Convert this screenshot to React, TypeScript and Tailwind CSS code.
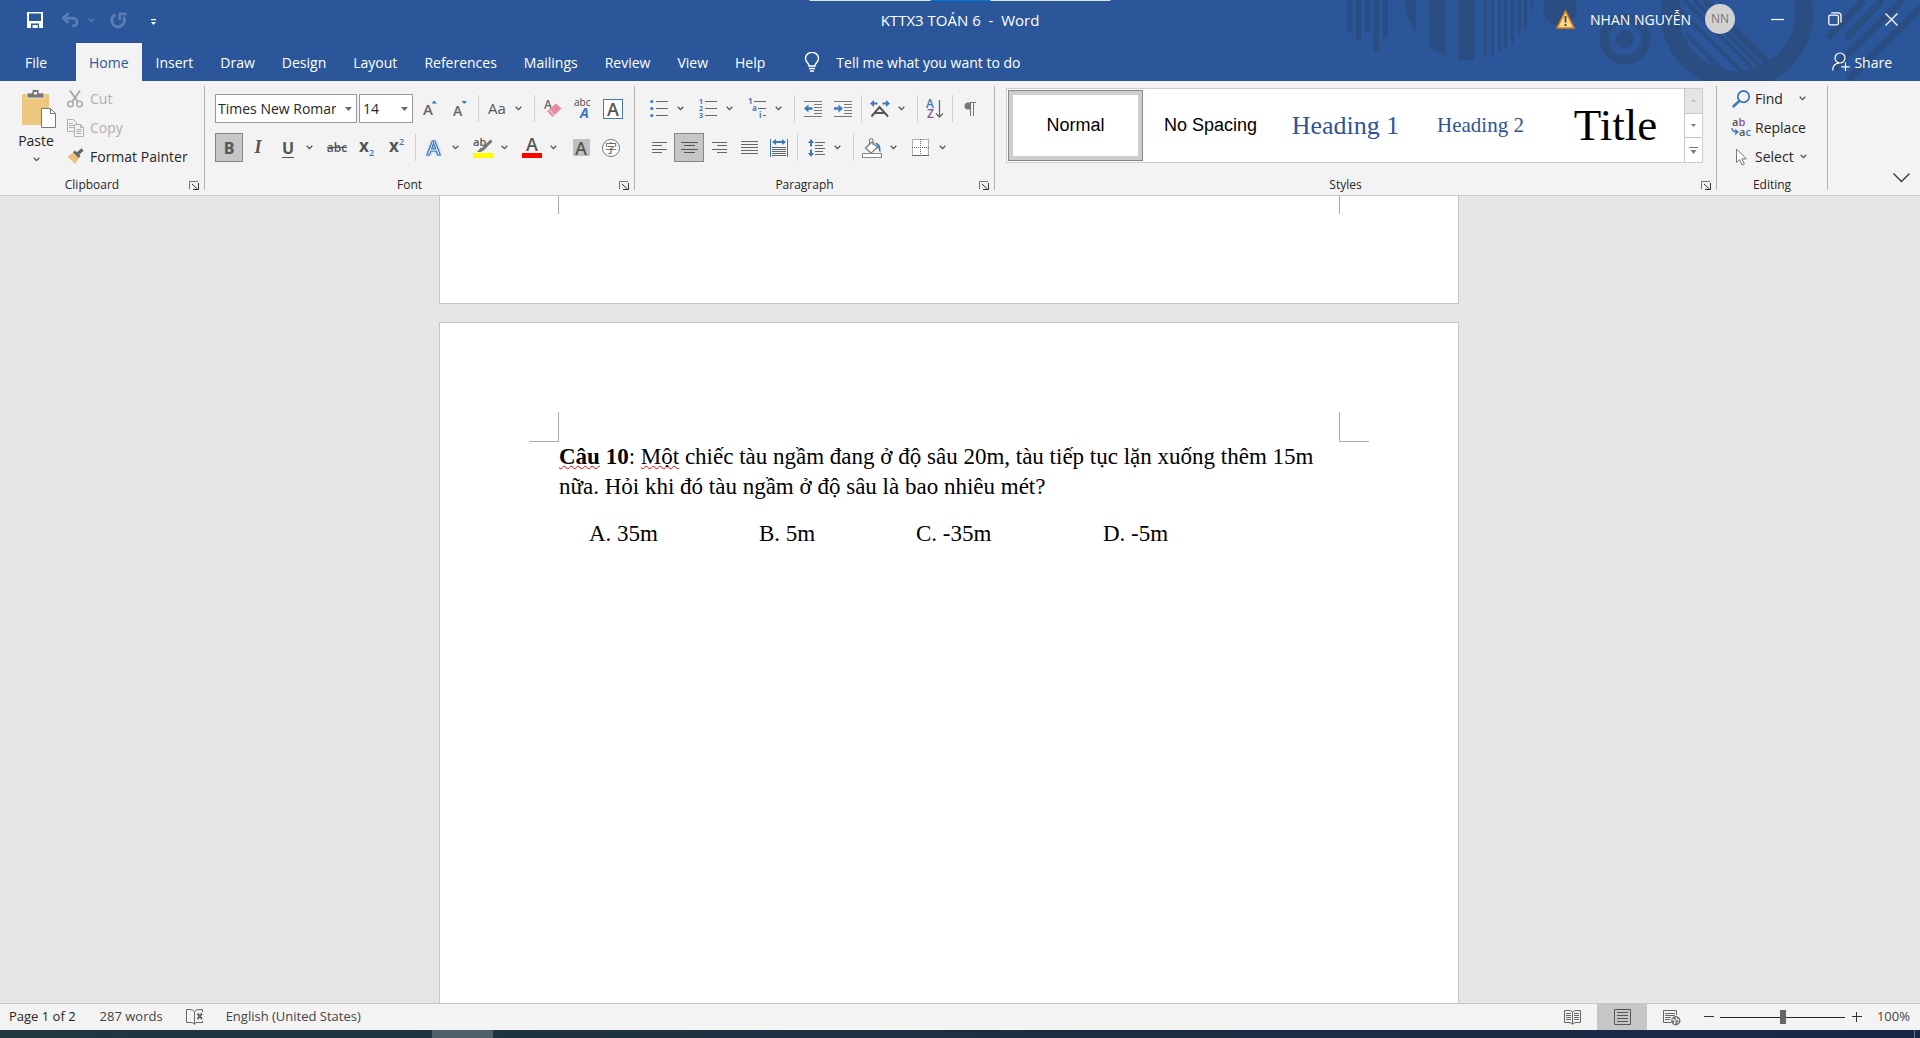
import React, { useState } from 'react';

const TABS = ['Home', 'Insert', 'Draw', 'Design', 'Layout', 'References', 'Mailings', 'Review', 'View', 'Help'];

const STYLES = [
  { name: 'Normal', cls: 'font-["Liberation_Sans",sans-serif] text-[18px] text-black' },
  { name: 'No Spacing', cls: 'font-["Liberation_Sans",sans-serif] text-[18px] text-black' },
  { name: 'Heading 1', cls: 'font-["Liberation_Serif",serif] text-[26px] text-[#2f5496]' },
  { name: 'Heading 2', cls: 'font-["Liberation_Serif",serif] text-[21px] text-[#2f5496]' },
  { name: 'Title', cls: 'font-["Liberation_Serif",serif] text-[45px] text-black' },
];

const ANSWERS = ['A. 35m', 'B. 5m', 'C. -35m', 'D. -5m'];

const Chevron: React.FC = () => (
  <svg width="7" height="5" viewBox="0 0 7 5" fill="none" stroke="#555555" strokeWidth="1.3">
    <path d="M0.7 0.8 L3.5 3.6 L6.3 0.8" />
  </svg>
);

const Triangle: React.FC<{ color?: string }> = ({ color = '#666666' }) => (
  <svg width="7" height="4" viewBox="0 0 7 4" fill={color}>
    <path d="M0 0 H7 L3.5 4 Z" />
  </svg>
);

const Sep: React.FC = () => <div className="mx-[3px] h-[27px] w-px bg-[#d2d0ce]" />;

interface ToolProps {
  label: string;
  active?: boolean;
  narrow?: boolean;
  children: React.ReactNode;
}

/** Single ribbon button that holds one icon. */
const Tool: React.FC<ToolProps> = ({ label, active, narrow, children }) => (
  <button
    aria-label={label}
    className={[
      'flex h-[29px] items-center justify-center',
      narrow ? 'w-[28px]' : 'w-[30px]',
      active ? 'border border-[#868686] bg-[#c6c6c6]' : 'hover:bg-[#dadada]',
    ].join(' ')}
  >
    {children}
  </button>
);

/** Ribbon button with a drop-down arrow beside the icon. */
const SplitTool: React.FC<ToolProps> = ({ label, children }) => (
  <button aria-label={label} className="flex h-[29px] w-[49px] items-center hover:bg-[#dadada]">
    <span className="flex w-[30px] items-center justify-center">{children}</span>
    <span className="pl-[3px]">
      <Chevron />
    </span>
  </button>
);

interface GroupProps {
  name: string;
  launcher?: boolean;
  className?: string;
  children: React.ReactNode;
}

/** Ribbon group with its caption row, followed by the vertical separator. */
const Group: React.FC<GroupProps> = ({ name, launcher = true, className = '', children }) => (
  <>
    <section aria-label={name} className={['flex flex-col', className].join(' ')}>
      <div className="flex-1">{children}</div>
      <div className="flex h-5 items-start">
        <span className="flex-1 text-center text-[12px] leading-5">{name}</span>
        {launcher && (
          <button aria-label={name + ' settings'} className="flex h-5 w-5 items-center justify-center">
            <svg width="10" height="9" viewBox="0 0 10 9" fill="none">
              <path d="M0.5 8 V0.5 H9" stroke="#777777" />
              <path d="M3 3 L8.5 8" stroke="#333333" />
              <path d="M9.5 2 V8.5 H4" stroke="#333333" />
            </svg>
          </button>
        )}
      </div>
    </section>
    <div className="my-[5px] w-px shrink-0 bg-[#b1b1b1]" />
  </>
);

/* Decorative theme pattern at the right end of the header */
const HeaderPattern: React.FC = () => (
  <svg className="absolute right-0 top-0" width="620" height="81" viewBox="0 0 620 81" fill="#2a4d82">
    <defs>
      <clipPath id="disc">
        <circle cx="169" cy="-5" r="65" />
      </clipPath>
      <clipPath id="hole">
        <circle cx="437" cy="13" r="58" />
      </clipPath>
    </defs>
    <path d="M47 0h5v32h-5z M56 0h5v41h-5z M65 0h5v32h-5z M74 0h5v52h-5z M83 0h5v38h-5z" />
    <g clipPath="url(#disc)">
      <path d="M104 0h12v80h-12z M129 0h17v80h-17z M158 0h16v80h-16z M184 0h3v80h-3z M191 0h3v80h-3z M198 0h3v80h-3z M204 0h3v80h-3z M211 0h3v80h-3z M218 0h3v80h-3z M224 0h3v80h-3z M231 0h3v80h-3z" />
    </g>
    <circle cx="260" cy="9" r="17" />
    <circle cx="325" cy="39" r="21" fill="none" stroke="#2a4d82" strokeWidth="9" />
    <circle cx="325" cy="39" r="9" />
    <circle cx="437" cy="13" r="67" fill="none" stroke="#2a4d82" strokeWidth="18" />
    <g clipPath="url(#hole)" stroke="#2a4d82">
      <path d="M386 34 L440 88 M375 5 L450 80 M384 0 L460 76 M394 0 L465 71" strokeWidth="4" />
      <path d="M405 0 L480 75" strokeWidth="7" />
    </g>
    <path d="M564 0 L528 38 M582 0 L546 38 M602 0 L534 68 M622 6 L548 80" fill="none" stroke="#2a4d82" strokeWidth="7" />
  </svg>
);

const TitleBar: React.FC = () => (
  <div className="relative grid h-[43px] grid-cols-[1fr_auto_1fr] items-center text-[14px] text-white">
    <div className="flex items-center pb-[3px] pl-[27px]">
      <button aria-label="Save" className="mr-[18px]">
        <svg width="16" height="16" viewBox="0 0 16 16">
          <path fill="#ffffff" fillRule="evenodd" d="M0 0H16V16H0Z M2 1.5V9H14V1.5Z" />
          <path fill="#2b579a" d="M4 11.5H12V16H10.5V13H7V16H4Z" />
          <path fill="#ffffff" d="M5.5 13H7V16H5.5Z M8.8 13H10.5V16H8.8Z" opacity="0.9" />
        </svg>
      </button>
      <button aria-label="Undo" disabled className="mr-[9px]">
        <svg width="18" height="16" viewBox="0 0 19 16" fill="none" stroke="#5b7db3" strokeWidth="3">
          <path d="M8 0.8 L2.2 6 L8 11.2" strokeWidth="2.6" />
          <path d="M2.5 6 H11 C15 6 17 8 17 10.5 C17 13 15 14.3 12 14.3" />
        </svg>
      </button>
      <svg className="mr-[15px]" width="7" height="5" viewBox="0 0 7 5" fill="none" stroke="#5b7db3" strokeWidth="1.3">
        <path d="M0.7 0.8 L3.5 3.6 L6.3 0.8" />
      </svg>
      <button aria-label="Repeat" disabled className="mr-[23px]">
        <svg width="17" height="17" viewBox="0 0 17 17" fill="none" stroke="#5b7db3" strokeWidth="3">
          <path d="M5.2 2.6 A6.4 6.4 0 1 0 13.6 5" />
          <path d="M9.7 8 V1.9 H16.5" strokeWidth="2.6" />
        </svg>
      </button>
      <button aria-label="Customize Quick Access Toolbar" className="pt-1">
        <svg width="7" height="7" viewBox="0 0 7 7" fill="#ffffff">
          <path d="M1 0H6V1.2H1Z M1 3H6L3.5 6Z" />
        </svg>
      </button>
    </div>
    <h1 className="whitespace-pre pb-[2px] text-[15px]">KTTX3 TOÁN 6  -  Word</h1>
    <div className="flex items-center justify-end self-start">
      <svg className="mr-[15px]" width="19" height="19" viewBox="0 0 19 19">
        <path d="M9.5 1.2 L18 18 H1 Z" fill="#fbd98b" stroke="#e07b1a" strokeWidth="1.6" />
        <path d="M9.5 6 V12.5 M9.5 14 V16" stroke="#444444" strokeWidth="1.8" />
      </svg>
      <span className="mr-[14px]">NHAN NGUYỄN</span>
      <span className="my-1 mr-[14px] flex h-[30px] w-[30px] items-center justify-center rounded-full bg-[#d2d2d2] text-[12px] text-[#777777]">
        NN
      </span>
      <button aria-label="Minimize" className="flex h-[38px] w-[57px] items-center justify-center">
        <svg width="13" height="13" stroke="#ffffff" strokeWidth="1.2">
          <path d="M0 6.5 H13" />
        </svg>
      </button>
      <button aria-label="Restore" className="flex h-[38px] w-[57px] items-center justify-center">
        <svg width="14" height="14" viewBox="0 0 14 14" fill="none" stroke="#ffffff" strokeWidth="1.3">
          <rect x="0.8" y="3.2" width="9.6" height="9.6" rx="1.5" />
          <path d="M3.2 0.8 H10 Q13 0.8 13 3.8 V10.4" />
        </svg>
      </button>
      <button aria-label="Close" className="flex h-[38px] w-[57px] items-center justify-center">
        <svg width="13" height="13" viewBox="0 0 13 13" stroke="#ffffff" strokeWidth="1.3">
          <path d="M0.5 0.5 L12.5 12.5 M12.5 0.5 L0.5 12.5" />
        </svg>
      </button>
    </div>
  </div>
);

const TabBar: React.FC<{ tab: string; onSelect: (t: string) => void }> = ({ tab, onSelect }) => (
  <nav className="relative flex h-[38px] items-stretch text-[14px] text-white">
    <button className="w-[76px] pr-1">File</button>
    <div className="flex gap-px">
      {TABS.map((t) => (
        <button
          key={t}
          onClick={() => onSelect(t)}
          className={['px-[13px]', t === tab ? 'bg-[#f3f3f3] text-[#2b579a]' : ''].join(' ')}
        >
          {t}
        </button>
      ))}
    </div>
    <label className="ml-[26px] flex items-center gap-4">
      <svg width="16" height="20" viewBox="0 0 16 20" fill="none" stroke="#ffffff" strokeWidth="1.4">
        <path d="M5 14 C5 11 1.5 10 1.5 6.5 A6.3 6 0 0 1 14.5 6.5 C14.5 10 11 11 11 14 Z" />
        <path d="M5 16.5 H11 M6 19 H10" />
      </svg>
      <input
        type="text"
        aria-label="Tell me what you want to do"
        placeholder="Tell me what you want to do"
        className="w-[220px] bg-transparent outline-none placeholder:text-white"
      />
    </label>
    <button className="ml-auto flex items-center gap-1 pr-[28px]">
      <svg width="18" height="20" viewBox="0 0 18 20" fill="none" stroke="#ffffff" strokeWidth="1.2">
        <circle cx="8" cy="6" r="5" />
        <path d="M0.7 18.5 C0.7 14 3 11.5 7 11.2 M13.5 10.5 V19 M9.3 14.8 H17.7" />
      </svg>
      Share
    </button>
  </nav>
);

const ClipboardGroup: React.FC = () => (
  <Group name="Clipboard" className="w-[204px]">
    <div className="flex pt-[3px]">
      <button className="flex w-[64px] flex-col items-center pl-2 pt-[5px] text-[14px] leading-5">
        <svg className="ml-2" width="36" height="40" viewBox="0 0 36 40">
          <rect x="0" y="5" width="27" height="31" rx="1" fill="#eec77f" />
          <path d="M5 9 V4 H10 V2 Q10 0.5 11.5 0.5 H15.5 Q17 0.5 17 2 V4 H22 V9 Z" fill="#777777" stroke="#f3f3f3" strokeWidth="0.8" />
          <rect x="12" y="3" width="3" height="2.5" fill="#f3f3f3" />
          <path d="M19.5 19.5 H28.5 L33.5 24.5 V38.5 H19.5 Z" fill="#ffffff" stroke="#777777" />
          <path d="M28.5 19.5 V24.5 H33.5" fill="none" stroke="#777777" />
        </svg>
        <span className="mt-[2px]">Paste</span>
        <span className="flex h-4 items-center">
          <Chevron />
        </span>
      </button>
      <div className="flex flex-col pl-[3px] text-[14px]">
        <button disabled className="flex h-[29px] items-center gap-[7px] text-[#b1afae]">
          <svg width="16" height="18" viewBox="0 0 16 18" fill="none" stroke="#aaaaaa" strokeWidth="1.5">
            <path d="M3 0.5 L11 12 M13 0.5 L5 12" strokeWidth="2" />
            <circle cx="3.5" cy="14" r="2.8" />
            <circle cx="12.5" cy="14" r="2.8" />
          </svg>
          Cut
        </button>
        <button disabled className="flex h-[29px] items-center gap-[6px] text-[#b1afae]">
          <svg width="17" height="18" viewBox="0 0 17 18" fill="#f3f3f3" stroke="#b3aeb6">
            <path d="M0.5 0.5 H6.5 L9.5 3.5 V12.5 H0.5 Z M2 4.5 H6 M2 6.5 H7 M2 8.5 H7" />
            <path d="M7.5 5.5 H13.5 L16.5 8.5 V17.5 H7.5 Z M13.5 5.5 V8.5 H16.5 M9.5 10.5 H14.5 M9.5 12.5 H14.5 M9.5 14.5 H14.5" />
          </svg>
          Copy
        </button>
        <button className="flex h-[29px] items-center gap-[6px]">
          <svg width="17" height="16" viewBox="0 0 17 16">
            <path d="M6.5 3.5 L12 9 L8 15 L0.5 7.5 Z" fill="#eec07a" />
            <path d="M6 3.2 L8 1.4 L13.5 7 L11.7 9 Z" fill="#666666" />
            <path d="M10.5 5 L15.5 0.5" stroke="#666666" strokeWidth="3.2" />
          </svg>
          Format Painter
        </button>
      </div>
    </div>
  </Group>
);

const FontGroup: React.FC = () => (
  <Group name="Font" className="w-[429px]">
    <div className="flex flex-col gap-[10px] pl-[10px] pt-[13px] text-[#555555]">
      <div className="flex items-center">
        <div className="relative mr-[2px] text-[14px] text-[#262626]">
          <select
            aria-label="Font"
            className="h-[29px] w-[142px] appearance-none border border-[#999999] bg-white pl-[2px] pr-[20px]"
          >
            <option>Times New Roman</option>
          </select>
          <span className="pointer-events-none absolute right-[5px] top-[13px]">
            <Triangle />
          </span>
        </div>
        <div className="relative mr-[2px] text-[14px] text-[#262626]">
          <select
            aria-label="Font size"
            className="h-[29px] w-[54px] appearance-none border border-[#999999] bg-white pl-[3px] pr-[16px]"
          >
            <option>14</option>
          </select>
          <span className="pointer-events-none absolute right-[5px] top-[13px]">
            <Triangle />
          </span>
        </div>
        <Tool label="Increase font size">
          <svg width="14" height="18" viewBox="0 0 14 18">
            <text x="0" y="15" fontSize="15" fontWeight="600" fill="#666666">A</text>
            <path d="M8.5 3.5 L11.2 0.5 L14 3.5 Z" fill="#3f78b8" />
          </svg>
        </Tool>
        <Tool label="Decrease font size">
          <svg width="14" height="18" viewBox="0 0 14 18">
            <text x="0" y="16" fontSize="14" fontWeight="600" fill="#666666">A</text>
            <path d="M8.5 1 L11.2 4 L14 1 Z" fill="#3f78b8" />
          </svg>
        </Tool>
        <Sep />
        <SplitTool label="Change case">
          <span className="text-[15px]">Aa</span>
        </SplitTool>
        <Sep />
        <Tool label="Clear formatting">
          <svg width="18" height="19" viewBox="0 0 18 19">
            <text x="0" y="10" fontSize="12" fontWeight="600" fill="#666666">A</text>
            <path d="M3 12 L12 4.5 L17.5 9.5 L8.5 18 Z" fill="#e78aa0" />
            <path d="M5 10.5 L10.5 16.5" stroke="#f3f3f3" />
          </svg>
        </Tool>
        <Tool label="Phonetic guide">
          <svg width="18" height="20" viewBox="0 0 18 20">
            <text x="0" y="7" fontSize="10" fill="#444444">abc</text>
            <text x="6" y="19" fontSize="14" fontWeight="700" fontStyle="italic" fill="#3f78b8">A</text>
          </svg>
        </Tool>
        <Tool label="Character border">
          <span className="flex h-5 w-5 items-center justify-center border border-[#3f78b8] bg-white text-[18px] font-semibold leading-none">
            A
          </span>
        </Tool>
      </div>
      <div className="flex items-center">
        <Tool label="Bold" active narrow>
          <span className="text-[16px] font-bold">B</span>
        </Tool>
        <Tool label="Italic">
          <span className='font-["Liberation_Serif",serif] text-[18px] font-bold italic'>I</span>
        </Tool>
        <SplitTool label="Underline">
          <span className="text-[16px] font-bold underline decoration-1 underline-offset-[3px]">U</span>
        </SplitTool>
        <Tool label="Strikethrough">
          <span className="text-[12px] font-semibold line-through">abc</span>
        </Tool>
        <Tool label="Subscript">
          <svg width="16" height="20" viewBox="0 0 16 20">
            <text x="0" y="14" fontSize="17" fontWeight="700" fill="#555555">x</text>
            <text x="10" y="18" fontSize="9" fontWeight="600" fill="#3f78b8">2</text>
          </svg>
        </Tool>
        <Tool label="Superscript">
          <svg width="16" height="20" viewBox="0 0 16 20">
            <text x="0" y="14" fontSize="17" fontWeight="700" fill="#555555">x</text>
            <text x="10" y="7" fontSize="9" fontWeight="600" fill="#3f78b8">2</text>
          </svg>
        </Tool>
        <Sep />
        <SplitTool label="Text effects">
          <svg width="18" height="20" viewBox="0 0 18 20">
            <text
              x="2"
              y="17"
              fontSize="20"
              fontWeight="600"
              fill="#ffffff"
              stroke="#3f78b8"
              strokeWidth="1.2"
              className="drop-shadow-[0_0_1px_#7fb2e5]"
            >
              A
            </text>
          </svg>
        </SplitTool>
        <SplitTool label="Text highlight color">
          <svg width="20" height="20" viewBox="0 0 20 20">
            <text x="0" y="8" fontSize="11" fontWeight="600" fill="#555555">ab</text>
            <path d="M18.5 2.5 L9 12" stroke="#777777" strokeWidth="3" />
            <path d="M4 14 L8 9.5 L10.5 12 L8 14 Z" fill="#777777" />
            <rect x="0" y="15" width="20" height="5" fill="#ffff00" />
          </svg>
        </SplitTool>
        <SplitTool label="Font color">
          <svg width="20" height="20" viewBox="0 0 20 20">
            <text x="4" y="13" fontSize="18" fontWeight="600" fill="#555555">A</text>
            <rect x="0" y="15" width="20" height="5" fill="#ff0000" />
          </svg>
        </SplitTool>
        <Tool label="Character shading">
          <span className="flex h-[17px] w-[17px] items-center justify-center bg-[#c0c0c0] text-[18px] font-semibold leading-none">
            A
          </span>
        </Tool>
        <Tool label="Enclose characters">
          <span className='flex h-[18px] w-[18px] items-center justify-center rounded-full border border-[#777777] bg-white font-["Noto_Sans_CJK_JP",sans-serif] text-[12px] leading-none'>
            字
          </span>
        </Tool>
      </div>
    </div>
  </Group>
);

const ParagraphGroup: React.FC = () => (
  <Group name="Paragraph" className="w-[359px]">
    <div className="flex flex-col gap-[10px] pl-[9px] pt-[13px]">
      <div className="flex items-center">
        <SplitTool label="Bullets">
          <svg width="19" height="18" viewBox="0 0 19 18">
            <path d="M6 1.5 H18 M6 8.5 H18 M6 15.5 H18" stroke="#666666" />
            <g fill="#3f78b8">
              <circle cx="1.8" cy="1.5" r="1.6" />
              <circle cx="1.8" cy="8.5" r="1.6" />
              <circle cx="1.8" cy="15.5" r="1.6" />
            </g>
          </svg>
        </SplitTool>
        <SplitTool label="Numbering">
          <svg width="19" height="20" viewBox="0 0 19 20">
            <path d="M6 2.5 H18 M6 9.5 H18 M6 16.5 H18" stroke="#666666" />
            <g fill="#3f78b8" fontSize="7" fontWeight="700">
              <text x="0" y="5">1</text>
              <text x="0" y="12">2</text>
              <text x="0" y="19">3</text>
            </g>
          </svg>
        </SplitTool>
        <SplitTool label="Multilevel list">
          <svg width="19" height="20" viewBox="0 0 19 20">
            <path d="M6 2.5 H18 M10 9.5 H18 M15 16.5 H18" stroke="#666666" />
            <g fill="#3f78b8" fontSize="8" fontWeight="700">
              <text x="0" y="5">1</text>
              <text x="4" y="12">a</text>
              <text x="11" y="19">i</text>
            </g>
          </svg>
        </SplitTool>
        <Sep />
        <Tool label="Decrease indent">
          <svg width="18" height="18" viewBox="0 0 18 18">
            <path d="M0 1.5 H18 M10 4.5 H18 M10 7.5 H18 M10 10.5 H18 M10 13.5 H18 M0 16.5 H18" stroke="#777777" />
            <path d="M0 8.5 L4.5 4.5 V7.3 H8.5 V9.7 H4.5 V12.5 Z" fill="#3f78b8" />
          </svg>
        </Tool>
        <Tool label="Increase indent">
          <svg width="18" height="18" viewBox="0 0 18 18">
            <path d="M0 1.5 H18 M10 4.5 H18 M10 7.5 H18 M10 10.5 H18 M10 13.5 H18 M0 16.5 H18" stroke="#777777" />
            <path d="M9 8.5 L4.5 4.5 V7.3 H0 V9.7 H4.5 V12.5 Z" fill="#3f78b8" />
          </svg>
        </Tool>
        <Sep />
        <SplitTool label="Asian layout">
          <svg width="20" height="18" viewBox="0 0 20 18">
            <path d="M1.5 16.5 L9.5 7 L18 16.5 M5 13 H14.5" fill="none" stroke="#555555" strokeWidth="2" />
            <path d="M0 3.5 L4 0 V2.5 H7.5 V4.5 H4 V7 Z M20 3.5 L16 0 V2.5 H12.5 V4.5 H16 V7 Z" fill="#3f78b8" />
          </svg>
        </SplitTool>
        <Sep />
        <Tool label="Sort" narrow>
          <svg width="18" height="20" viewBox="0 0 18 20">
            <text x="0" y="9" fontSize="12" fontWeight="600" fill="#3f78b8">A</text>
            <text x="1" y="19" fontSize="12" fontWeight="600" fill="#8a52a5">Z</text>
            <path d="M13.5 1 V18 M10 14.5 L13.5 18 L17 14.5" fill="none" stroke="#666666" strokeWidth="1.3" />
          </svg>
        </Tool>
        <Sep />
        <Tool label="Show paragraph marks" narrow>
          <svg width="12" height="14" viewBox="0 0 12 14">
            <path d="M6 0.5 H12 M6.5 0.5 V14 M9.5 0.5 V14" stroke="#777777" fill="none" />
            <path d="M6.5 0.5 H4 A3.4 3.4 0 0 0 4 7.5 H6.5 Z" fill="#777777" />
          </svg>
        </Tool>
      </div>
      <div className="flex items-center">
        <Tool label="Align left">
          <svg width="15" height="11" stroke="#666666">
            <path d="M0 0.5 H15 M0 3.5 H10 M0 7.5 H15 M0 10.5 H10" />
          </svg>
        </Tool>
        <Tool label="Center" active>
          <svg width="17" height="11" stroke="#555555">
            <path d="M0 0.5 H17 M3 3.5 H14 M0 7.5 H17 M3 10.5 H14" />
          </svg>
        </Tool>
        <Tool label="Align right">
          <svg width="15" height="11" stroke="#666666">
            <path d="M0 0.5 H15 M5 3.5 H15 M0 7.5 H15 M5 10.5 H15" />
          </svg>
        </Tool>
        <Tool label="Justify">
          <svg width="17" height="13" stroke="#666666">
            <path d="M0 0.5 H17 M0 3.5 H17 M0 6.5 H17 M0 9.5 H17 M0 12.5 H17" />
          </svg>
        </Tool>
        <Tool label="Distributed">
          <svg width="18" height="18" viewBox="0 0 18 18">
            <path d="M0.5 0 V18 M17.5 0 V18" stroke="#3f78b8" />
            <path d="M2 8.5 H16 M2 10.5 H16 M2 12.5 H16 M2 14.5 H16 M2 16.5 H16" stroke="#666666" />
            <path d="M2 3 L6 0 V2 H12 V0 L16 3 L12 6 V4 H6 V6 Z" fill="#3f78b8" />
          </svg>
        </Tool>
        <Sep />
        <SplitTool label="Line spacing">
          <svg width="17" height="18" viewBox="0 0 17 18">
            <path d="M7 3.5 H17 M7 6.5 H15 M7 9.5 H17 M7 12.5 H15 M7 15.5 H17" stroke="#666666" />
            <path d="M3 0 L6 4 H4 V7.5 H2 V4 H0 Z M3 18 L6 14 H4 V10.5 H2 V14 H0 Z" fill="#3f78b8" />
          </svg>
        </SplitTool>
        <Sep />
        <SplitTool label="Shading">
          <svg width="20" height="20" viewBox="0 0 20 20">
            <path d="M3.5 10 L10 4 L15.5 9.5 L9 15 Z" fill="#ffffff" stroke="#777777" strokeWidth="1.2" />
            <path d="M7.5 7 V2 Q7.5 0.6 9.3 0.6 Q11 0.6 11 2 V7" fill="none" stroke="#777777" />
            <path d="M13 4.5 Q19.5 5 18.5 14.5 Q16.5 13 16.3 9.5 Z" fill="#3f78b8" />
            <rect x="0.5" y="15.5" width="19" height="4" fill="#ffffff" stroke="#888888" />
          </svg>
        </SplitTool>
        <SplitTool label="Borders">
          <svg width="18" height="18" viewBox="0 0 18 18" stroke="#666666">
            <rect x="0.5" y="0.5" width="16" height="16" fill="#ffffff" strokeDasharray="1 1" />
            <path d="M8.5 0 V16 M0 8.5 H17" strokeDasharray="1 1" />
            <path d="M0 16.5 H17" />
          </svg>
        </SplitTool>
      </div>
    </div>
  </Group>
);

const StylesGroup: React.FC = () => {
  const [style, setStyle] = useState('Normal');

  return (
    <Group name="Styles" className="min-w-0 flex-1">
      <div className="ml-[11px] mr-[13px] mt-[7px] flex h-[75px] border border-[#cccccc] bg-white">
        <div className="flex min-w-0 flex-1 overflow-hidden p-px">
          {STYLES.map((s) => (
            <button
              key={s.name}
              onClick={() => setStyle(s.name)}
              className={[
                'flex w-[135px] shrink-0 items-center justify-center whitespace-nowrap',
                s.name === style ? 'border border-[#868686] ring-4 ring-inset ring-[#d0cecc]' : '',
                s.cls,
              ].join(' ')}
            >
              {s.name}
            </button>
          ))}
        </div>
        <div className="flex w-[18px] flex-col divide-y divide-[#c6c6c6] border-l border-[#c6c6c6]">
          <button aria-label="Previous styles" disabled className="flex flex-1 items-center justify-center bg-[#e5e5e5]">
            <svg width="5" height="3" fill="#bbbbbb">
              <path d="M0 3 H5 L2.5 0 Z" />
            </svg>
          </button>
          <button aria-label="Next styles" className="flex flex-1 items-center justify-center">
            <svg width="5" height="3" fill="#777777">
              <path d="M0 0 H5 L2.5 3 Z" />
            </svg>
          </button>
          <button aria-label="More styles" className="flex flex-1 items-center justify-center">
            <svg width="9" height="7" fill="#777777">
              <path d="M0 0 H9 V1 H0 Z M1.5 3 H7.5 L4.5 7 Z" />
            </svg>
          </button>
        </div>
      </div>
    </Group>
  );
};

const EditingGroup: React.FC = () => (
  <Group name="Editing" launcher={false} className="w-[110px]">
    <div className="flex flex-col pl-[14px] pt-[3px] text-[14px]">
      <button className="flex h-[29px] items-center">
        <svg className="mr-1" width="20" height="18" viewBox="0 0 20 18" fill="none" stroke="#3f78b8">
          <circle cx="12.5" cy="6.7" r="5.7" strokeWidth="1.8" />
          <path d="M8.3 11 L1.8 17" strokeWidth="2.6" />
        </svg>
        Find
        <span className="ml-[16px]">
          <Chevron />
        </span>
      </button>
      <button className="flex h-[29px] items-center">
        <svg className="mr-1" width="20" height="20" viewBox="0 0 20 20" fontSize="11" fontWeight="600">
          <text x="1" y="8" fill="#555555">
            a<tspan fill="#8a52a5">b</tspan>
          </text>
          <text x="8" y="18" fill="#555555">
            a<tspan fill="#3f78b8">c</tspan>
          </text>
          <path d="M1 10 Q1 14 6 14 M4 11.5 L7 14 L4 16.5" fill="none" stroke="#3f78b8" strokeWidth="1.4" />
        </svg>
        Replace
      </button>
      <button className="flex h-[29px] items-center">
        <svg className="mr-1" width="20" height="18" viewBox="0 0 20 18" fill="#ffffff" stroke="#777777">
          <path d="M5.5 1 V14.5 L8.7 11.5 L11 17 L13.4 16 L11 10.8 H15.3 Z" />
        </svg>
        Select
        <span className="ml-[6px]">
          <Chevron />
        </span>
      </button>
    </div>
  </Group>
);

const Ribbon: React.FC = () => (
  <div className="flex h-[115px] shrink-0 border-b border-[#c8c8c8] bg-[#f3f3f3] text-[#262626] [&_svg]:overflow-visible">
    <ClipboardGroup />
    <FontGroup />
    <ParagraphGroup />
    <StylesGroup />
    <EditingGroup />
    <div className="flex w-[92px] items-end justify-end pb-[12px] pr-[10px]">
      <button aria-label="Collapse the ribbon">
        <svg width="17" height="10" viewBox="0 0 17 10" fill="none" stroke="#333333" strokeWidth="1.3">
          <path d="M0.5 0.5 L8.5 8.5 L16.5 0.5" />
        </svg>
      </button>
    </div>
  </div>
);

const Misspelled: React.FC<{ children: React.ReactNode }> = ({ children }) => (
  <span className="underline decoration-[#ff0000] decoration-wavy decoration-1 underline-offset-[1px] [text-decoration-skip-ink:none]">
    {children}
  </span>
);

const DocumentView: React.FC = () => (
  <main className="flex min-h-0 flex-1 flex-col items-center overflow-hidden bg-[#e6e6e6] pr-[22px]">
    {/* Bottom edge of the first page */}
    <div className="h-[108px] w-[1020px] shrink-0 border border-t-0 border-[#c6c6c6] bg-white px-[118px]">
      <div className="h-[18px] border-x border-[#ababab]" />
    </div>

    <article className="mt-[18px] w-[1020px] flex-1 border border-b-0 border-[#c6c6c6] bg-white pt-[89px]">
      <div className="flex justify-between px-[89px]">
        <div className="h-[30px] w-[30px] border-b border-r border-[#ababab]" />
        <div className="h-[30px] w-[30px] border-b border-l border-[#ababab]" />
      </div>
      <div className='px-[119px] font-["Liberation_Serif",serif] text-[23px] leading-[30px] text-black'>
        <p>
          <b>
            <Misspelled>Câu</Misspelled> 10
          </b>
          : <Misspelled>Một</Misspelled> chiếc tàu ngầm đang ở độ sâu 20m, tàu tiếp tục lặn xuống thêm 15m
          <br />
          nữa. Hỏi khi đó tàu ngầm ở độ sâu là bao nhiêu mét?
        </p>
        <p className="grid grid-cols-[170px_157px_187px_auto] pl-[30px] pt-[17px]">
          {ANSWERS.map((a) => (
            <span key={a}>{a}</span>
          ))}
        </p>
      </div>
    </article>
  </main>
);

const StatusBar: React.FC = () => {
  const [zoom, setZoom] = useState(50);

  return (
    <footer className="flex h-[27px] shrink-0 items-stretch border-t border-[#c6c6c6] bg-[#f3f3f3] text-[13px] text-[#444444]">
      <button className="pl-[9px] text-[#262626]">Page 1 of 2</button>
      <button className="pl-[24px]">287 words</button>
      <button aria-label="Proofing" className="px-[23px]">
        <svg width="17" height="16" viewBox="0 0 17 16" fill="none" stroke="#666666">
          <path d="M8.5 2.5 Q7 0.5 4 0.5 H0.5 V13.5 H5 Q8 13.5 8.5 15.5 Q9 13.5 11 13.5 H16.5 V12 M8.5 2.5 V15 M8.5 2.5 Q10 0.5 13 0.5 H16.5 V3" />
          <path d="M11.5 4.5 L16 10 M16 4.5 L11.5 10" strokeWidth="2" />
        </svg>
      </button>
      <button>English (United States)</button>

      <div className="ml-auto flex items-stretch">
        <button aria-label="Read mode" className="flex w-[50px] items-center justify-center">
          <svg width="17" height="15" viewBox="0 0 17 15" fill="none" stroke="#666666">
            <path d="M8.5 2 Q7 0.5 5 0.5 H0.5 V12.5 H5 Q8 12.5 8.5 14.5 Q9 12.5 12 12.5 H16.5 V0.5 H12 Q10 0.5 8.5 2 V14" />
            <path d="M2 3.5 H7 M2 5.5 H7 M2 7.5 H7 M2 9.5 H7 M10 3.5 H15 M10 5.5 H15 M10 7.5 H15 M10 9.5 H15" />
          </svg>
        </button>
        <button aria-label="Print layout" className="flex w-[50px] items-center justify-center bg-[#c6c6c6]">
          <svg width="17" height="16" viewBox="0 0 17 16" fill="none" stroke="#555555">
            <path d="M0.5 0.5 H16.5 V15.5 H0.5 Z M3 3.5 H14 M3 6.5 H14 M3 9.5 H14 M3 12.5 H14" />
          </svg>
        </button>
        <button aria-label="Web layout" className="flex w-[50px] items-center justify-center">
          <svg width="18" height="17" viewBox="0 0 18 17" fill="none" stroke="#666666">
            <path d="M8 13.5 H0.5 V1.5 H13.5 V6 M2 4.5 H12 M2 6.5 H12 M2 8.5 H8 M2 10.5 H7" />
            <circle cx="12.8" cy="11.8" r="4.7" fill="#777777" stroke="none" />
            <path d="M9.5 10 L12 12 L11.5 15 M13 8.5 L13.5 10.5 L16 11 M14.5 13 L15.5 14" stroke="#f3f3f3" strokeWidth="1.3" />
          </svg>
        </button>
        <button aria-label="Zoom out" className="flex w-[23px] items-center justify-center" onClick={() => setZoom(zoom - 5)}>
          <svg width="10" height="10" stroke="#333333">
            <path d="M0 4.5 H10" />
          </svg>
        </button>
        <input
          type="range"
          aria-label="Zoom"
          value={zoom}
          onChange={(e) => setZoom(Number(e.target.value))}
          className="my-auto h-[14px] w-[125px] appearance-none bg-transparent [&::-webkit-slider-runnable-track]:h-px [&::-webkit-slider-runnable-track]:bg-[#262626] [&::-webkit-slider-thumb]:-mt-[7px] [&::-webkit-slider-thumb]:h-[14px] [&::-webkit-slider-thumb]:w-[6px] [&::-webkit-slider-thumb]:appearance-none [&::-webkit-slider-thumb]:bg-[#666666]"
        />
        <button aria-label="Zoom in" className="flex w-[23px] items-center justify-center" onClick={() => setZoom(zoom + 5)}>
          <svg width="10" height="10" stroke="#333333">
            <path d="M0 4.5 H10 M4.5 0 V10" />
          </svg>
        </button>
        <span className="flex w-[52px] items-center justify-end pr-[10px]">{zoom * 2}%</span>
      </div>
    </footer>
  );
};

const App: React.FC = () => {
  const [tab, setTab] = useState('Home');

  return (
    <div className='flex h-screen flex-col overflow-hidden font-["Open_Sans",sans-serif]'>
      <header className="relative shrink-0 bg-[#2b579a]">
        <HeaderPattern />
        <TitleBar />
        <TabBar tab={tab} onSelect={setTab} />
        {/* Edge of the drop-down bar that peeks over the title */}
        <div className="absolute left-1/2 top-0 flex h-px w-[301px] -translate-x-1/2 justify-center bg-[#dde3e3]">
          <div className="w-[60px] bg-[#0078d7]" />
        </div>
      </header>
      <Ribbon />
      <DocumentView />
      <StatusBar />
      {/* Taskbar edge */}
      <div className="flex h-2 shrink-0 bg-linear-to-r from-[#203740] to-[#1a2744]">
        <div className="ml-[432px] w-[61px] bg-[#4f6068]" />
        <div className="ml-auto mr-[5px] w-px bg-[#6b7590]" />
      </div>
    </div>
  );
};

export default App;
